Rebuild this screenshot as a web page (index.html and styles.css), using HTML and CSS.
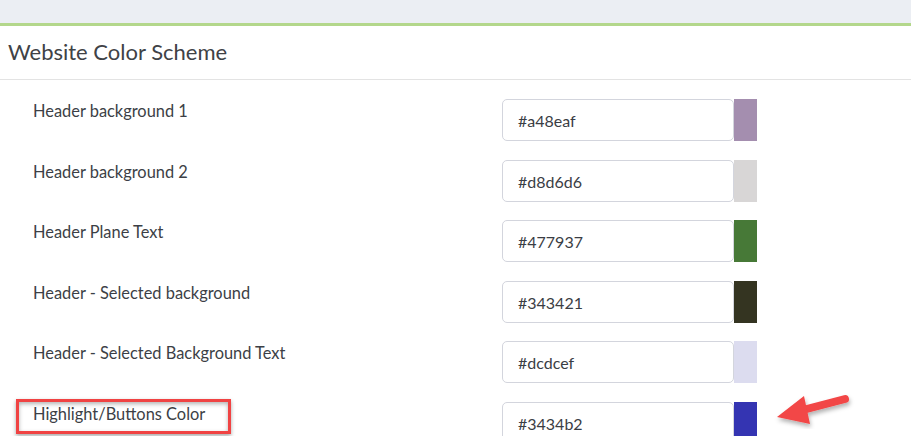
FILE: index.html
```html
<!DOCTYPE html>
<html>
<head>
<meta charset="utf-8">
<link rel="stylesheet" href="styles.css">
</head>
<body>
<div class="topbar"></div>
<div class="panel">
  <div class="panel-head"><h2 class="title">Website Color Scheme</h2></div>
  <div class="rows">
    <div class="row">
      <div class="label">Header background 1</div>
      <div class="field"><div class="input">#a48eaf</div><div class="swatch" style="background:#a48eaf"></div></div>
    </div>
    <div class="row">
      <div class="label">Header background 2</div>
      <div class="field"><div class="input">#d8d6d6</div><div class="swatch" style="background:#d8d6d6"></div></div>
    </div>
    <div class="row">
      <div class="label">Header Plane Text</div>
      <div class="field"><div class="input">#477937</div><div class="swatch" style="background:#477937"></div></div>
    </div>
    <div class="row">
      <div class="label">Header - Selected background</div>
      <div class="field"><div class="input">#343421</div><div class="swatch" style="background:#343421"></div></div>
    </div>
    <div class="row">
      <div class="label">Header - Selected Background Text</div>
      <div class="field"><div class="input">#dcdcef</div><div class="swatch" style="background:#dcdcef"></div></div>
    </div>
    <div class="row">
      <div class="label"><span class="highlight-box"></span>Highlight/Buttons Color</div>
      <div class="field"><div class="input">#3434b2</div><div class="swatch" style="background:#3434b2"></div></div>
      <svg class="arrow" width="90" height="40" viewBox="0 0 90 40">
        <defs>
          <filter id="sh" x="-20%" y="-20%" width="140%" height="160%">
            <feDropShadow dx="1" dy="3" stdDeviation="2" flood-color="#000" flood-opacity="0.3"/>
          </filter>
        </defs>
        <g filter="url(#sh)">
          <line x1="30" y1="22" x2="76" y2="10" stroke="#f24646" stroke-width="8" stroke-linecap="round"/>
          <polygon points="8,28 35,7 41,35" fill="#f24646"/>
        </g>
      </svg>
    </div>
  </div>
</div>
</body>
</html>
```
FILE: styles.css
```css
html, body {
  margin: 0;
  padding: 0;
  background: #ffffff;
  font-family: "Source Sans Pro", "Lato", "Open Sans", sans-serif;
  overflow: hidden;
}
.topbar {
  height: 23px;
  background: #ebeef3;
  border-bottom: 3px solid #b3d78b;
}
.panel-head {
  height: 53px;
  border-bottom: 1px solid #e3e3e3;
  display: flex;
  align-items: center;
}
.title {
  margin: 0 0 0 8px;
  font-weight: 400;
  font-size: 22px;
  color: #404246;
  padding-bottom: 2px;
}
.rows {
  padding: 19px 0 0 33px;
}
.row {
  display: flex;
  align-items: flex-start;
  height: 42px;
  margin-bottom: 18.6px;
  position: relative;
}
.label {
  width: 469px;
  font-size: 16.4px;
  line-height: 20px;
  padding-top: 2px;
  color: #3c3f46;
  position: relative;
}
.field {
  display: flex;
  height: 42px;
}
.input {
  width: 200px;
  height: 40px;
  border: 1px solid #d3d5dd;
  border-radius: 5px;
  padding: 0 15px;
  font-size: 16px;
  line-height: 42px;
  color: #3a3d44;
}
.swatch {
  width: 23px;
  height: 42px;
}
.highlight-box {
  position: absolute;
  left: -17px;
  top: -3px;
  width: 209px;
  height: 29px;
  border: 3px solid #f04343;
  box-shadow: 0 2px 4px rgba(0,0,0,0.35), inset 0 2px 4px rgba(0,0,0,0.3);
}
.arrow {
  position: absolute;
  left: 736px;
  top: -13px;
}
```
